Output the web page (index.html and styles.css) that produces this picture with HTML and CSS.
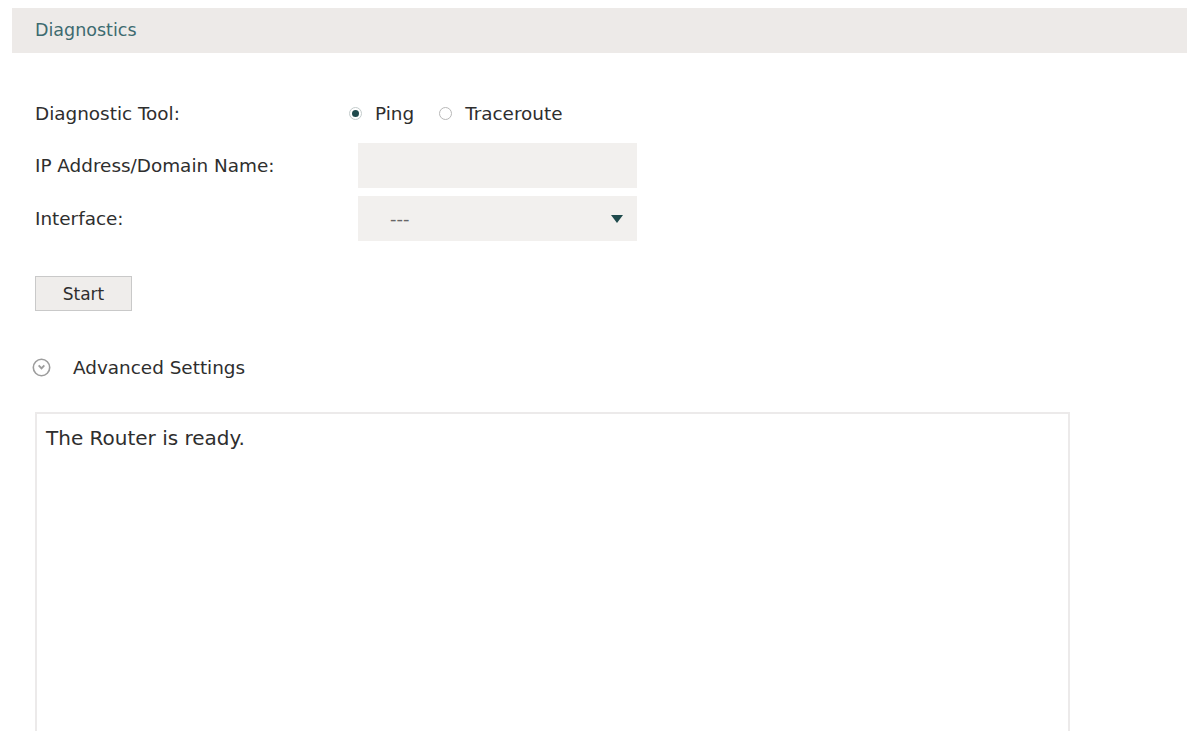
FILE: index.html
```html
<!DOCTYPE html>
<html lang="en">
<head>
  <meta charset="UTF-8">
  <title>Diagnostics</title>
  <link rel="stylesheet" href="styles.css">
</head>
<body>
<div class="page">
  <div class="panel-head">Diagnostics</div>

  <div class="form">
    <div class="row">
      <span class="label">Diagnostic Tool:</span>
      <div class="radios">
        <span class="radio checked"></span><span class="radio-text">Ping</span>
        <span class="radio"></span><span class="radio-text">Traceroute</span>
      </div>
    </div>
    <div class="row">
      <span class="label">IP Address/Domain Name:</span>
      <div class="field"></div>
    </div>
    <div class="row">
      <span class="label">Interface:</span>
      <div class="field select">
        <span>---</span>
        <svg width="12" height="8" viewBox="0 0 12 8"><path d="M0 0H12L6 8Z" fill="#1f4a4c"/></svg>
      </div>
    </div>
  </div>

  <button class="btn">Start</button>

  <div class="advanced">
    <svg width="19" height="19" viewBox="0 0 19 19">
      <circle cx="9.5" cy="9.5" r="8.2" fill="none" stroke="#9d9d9d" stroke-width="1.6"/>
      <path d="M6 8 L9.5 11.8 L13 8 L11.7 6.8 L9.5 9 L7.3 6.8Z" fill="#9d9d9d"/>
    </svg>
    <span>Advanced Settings</span>
  </div>

  <div class="output">The Router is ready.</div>
</div>
</body>
</html>
```

FILE: styles.css
```css
:root {
  --head-bg: #edeae8;
  --teal: #3d6b70;
  --field-bg: #f2f0ee;
  --text: #2e2e2e;
}
html, body {
  margin: 0;
  background: #fff;
  overflow: hidden;
}
body {
  font-family: "DejaVu Sans", Verdana, sans-serif;
  font-size: 18.4px;
  color: var(--text);
  padding-top: 8px;
}
.page {
  padding-left: 12px;
}
.panel-head {
  height: 45px;
  line-height: 45px;
  background: var(--head-bg);
  color: var(--teal);
  font-size: 17.5px;
  padding-left: 23px;
}
.form {
  margin-top: 40px;
  padding-left: 23px;
  display: flex;
  flex-direction: column;
  gap: 8px;
}
.row {
  display: flex;
  align-items: center;
  min-height: 45px;
}
.row:first-child {
  min-height: 40px;
  margin-bottom: 2px;
}
.label {
  width: 323px;
}
.radios {
  display: flex;
  align-items: center;
  margin-left: -9px;
}
.radio {
  width: 13px;
  height: 13px;
  border-radius: 50%;
  border: 1px solid #b8b8b8;
  box-sizing: border-box;
  margin-right: 13px;
  position: relative;
}
.radio.checked {
  border-color: #c4cccc;
}
.radio.checked::after {
  content: "";
  position: absolute;
  left: 2px;
  top: 2px;
  width: 7px;
  height: 7px;
  border-radius: 50%;
  background: #1f4a4c;
}
.radio-text {
  margin-right: 25px;
}
.field {
  width: 279px;
  height: 45px;
  background: var(--field-bg);
  box-sizing: border-box;
}
.select {
  display: flex;
  align-items: center;
  justify-content: space-between;
  padding: 0 14px 0 32px;
  color: #666;
  font-size: 18px;
}
.btn {
  display: block;
  margin: 35px 0 0 23px;
  width: 97px;
  height: 35px;
  background: #efedeb;
  border: 1px solid #c9c9c9;
  font-family: inherit;
  font-size: 17px;
  color: var(--text);
  padding: 0;
}
.advanced {
  display: flex;
  align-items: center;
  gap: 22px;
  margin: 46px 0 0 20px;
}
.output {
  margin: 34px 0 0 23px;
  width: 1035px;
  height: 340px;
  border: 2px solid #eceaea;
  box-sizing: border-box;
  padding: 12px 9px;
  font-size: 20px;
}
```
